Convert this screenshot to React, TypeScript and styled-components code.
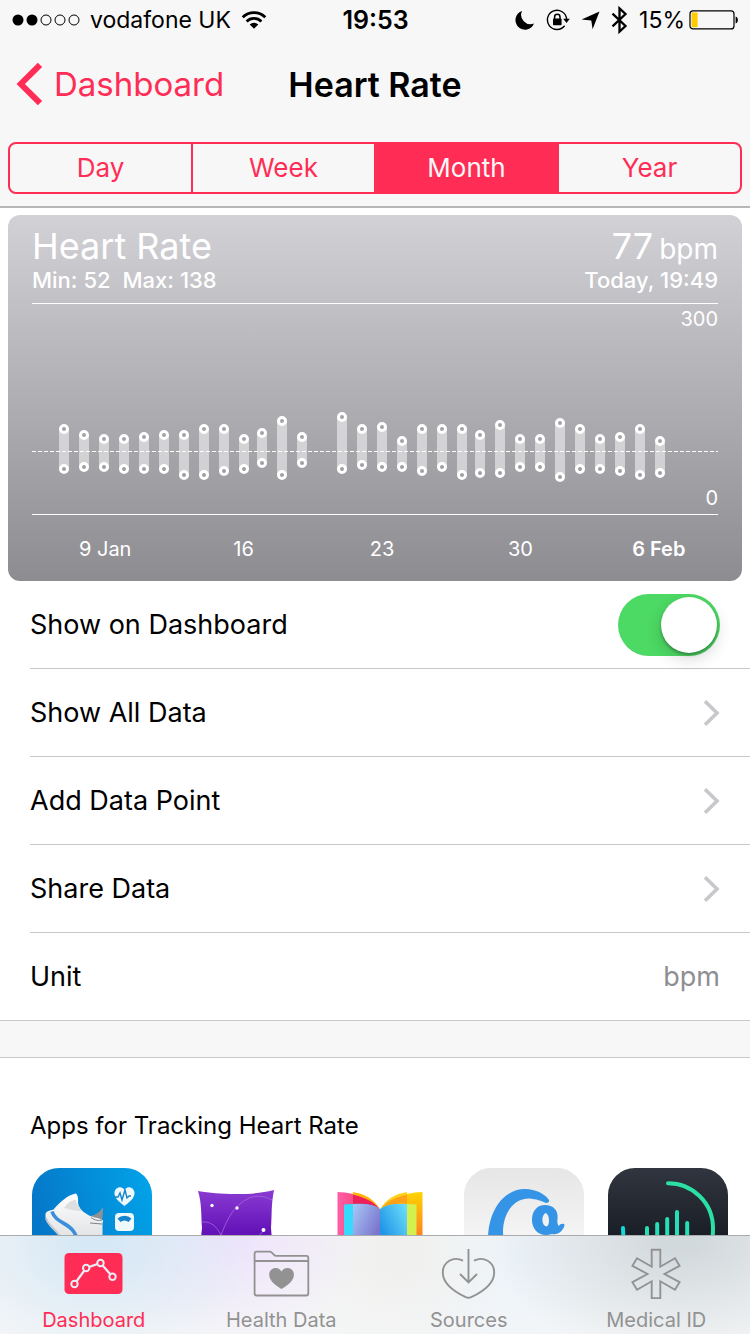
import React, { useState } from 'react';
import styled, { createGlobalStyle } from 'styled-components';

const PINK = '#ff2d55';
const GREY = '#929292';
const LINE = '#c8c7cc';

const GlobalStyle = createGlobalStyle`
  *, *::before, *::after { box-sizing: border-box; }
  body {
    margin: 0;
    background: #fff;
    color: #000;
    font-family: Inter, "Liberation Sans", sans-serif;
  }
  button, input { font: inherit; color: inherit; margin: 0; }
`;

const Page = styled.div`
  display: flex;
  flex-direction: column;
  min-height: 100vh;
`;

const Header = styled.header`
  background: #f7f7f7;
  border-bottom: 2px solid #b7b7b7;
`;

const StatusBar = styled.div`
  display: grid;
  grid-template-columns: 1fr auto 1fr;
  align-items: center;
  height: 40px;
  padding: 0 11px 0 12px;
  font-size: 23px;
`;

const StatusGroup = styled.div<{ $end?: boolean }>`
  display: flex;
  align-items: center;
  justify-content: ${(p) => (p.$end ? 'flex-end' : 'flex-start')};
  gap: ${(p) => (p.$end ? 11 : 10)}px;
`;

const Clock = styled.time`
  font-size: 25px;
  font-weight: 600;
`;

const Battery = styled.span`
  display: flex;
  align-items: center;
  gap: 4px;
`;

const NavBar = styled.nav`
  display: grid;
  grid-template-columns: 1fr auto 1fr;
  align-items: center;
  height: 88px;
  padding: 0 16px;
`;

const BackLink = styled.a`
  display: flex;
  align-items: center;
  gap: 10px;
  color: ${PINK};
  font-size: 33px;
  text-decoration: none;
`;

const NavTitle = styled.h1`
  margin: 0;
  font-size: 34px;
  font-weight: 600;
`;

const Segments = styled.div`
  display: flex;
  height: 52px;
  margin: 14px 8px 12px;
  border: 2px solid ${PINK};
  border-radius: 8px;
  overflow: hidden;
`;

const Segment = styled.button<{ $active: boolean }>`
  flex: 1;
  padding: 0;
  border: 0;
  background: ${(p) => (p.$active ? PINK : 'transparent')};
  color: ${(p) => (p.$active ? '#f7f7f7' : PINK)};
  font-size: 26px;
  line-height: 48px;
  & + & { border-left: 2px solid ${PINK}; }
`;

const Card = styled.section`
  margin: 7px 8px 0;
  padding: 11px 0 12px;
  border-radius: 12px;
  background: linear-gradient(#d2d1d6, #8d8c91);
  color: #fff;
`;

const CardRow = styled.div<{ $large?: boolean }>`
  display: flex;
  justify-content: space-between;
  align-items: baseline;
  height: ${(p) => (p.$large ? 40 : 28)}px;
  margin: 0 24px;
  font-size: ${(p) => (p.$large ? 36 : 22)}px;
  font-weight: ${(p) => (p.$large ? 400 : 500)};
  line-height: ${(p) => (p.$large ? 40 : 28)}px;
`;

const CardTitle = styled.h2`
  margin: 0;
  font: inherit;
`;

const Range = styled.span`
  display: flex;
  gap: 12px;
`;

const BpmUnit = styled.span`
  margin-left: 6px;
  font-size: 28px;
`;

const Plot = styled.div`
  position: relative;
  margin: 9px 24px 0;
  border-top: 1px solid #fff;
  border-bottom: 1px solid #fff;
`;

const PlotDrawing = styled.svg`
  display: block;
  width: 100%;
`;

const ScaleLabel = styled.span<{ $bottom?: boolean }>`
  position: absolute;
  right: 0;
  ${(p) => (p.$bottom ? 'bottom: 4px;' : 'top: 3px;')}
  font-size: 20px;
  line-height: 24px;
`;

const DateAxis = styled.div`
  display: grid;
  grid-template-columns: repeat(5, 1fr);
  margin-top: 15px;
  padding: 0 14px 0 28px;
  text-align: center;
  font-size: 20px;
  line-height: 39px;
`;

const AxisDate = styled.span<{ $current: boolean }>`
  font-weight: ${(p) => (p.$current ? 600 : 400)};
`;

const Rows = styled.div`
  border-bottom: 1px solid ${LINE};
  font-size: 27px;
  > * + * { border-top: 1px solid ${LINE}; }
`;

const rowLayout = `
  display: flex;
  align-items: center;
  justify-content: space-between;
  box-sizing: content-box;
  height: 87px;
  margin-left: 30px;
  padding: 0 30px 0 0;
  color: inherit;
  text-decoration: none;
`;

const LinkRow = styled.a`${rowLayout}`;
const ValueRow = styled.div`${rowLayout}`;
const SwitchRow = styled.label`${rowLayout}`;

const RowValue = styled.span`
  color: #8e8e93;
`;

const Switch = styled.input`
  appearance: none;
  display: flex;
  align-items: center;
  width: 102px;
  height: 62px;
  padding: 0 3px;
  border-radius: 31px;
  background: #e5e5ea;
  &::before {
    content: '';
    width: 56px;
    height: 56px;
    border-radius: 50%;
    background: #fff;
    box-shadow: 0 6px 16px rgba(0, 0, 0, 0.16), 0 2px 3px rgba(0, 0, 0, 0.3);
  }
  &:checked {
    justify-content: flex-end;
    background: #4cd964;
  }
`;

const AppsSection = styled.section`
  flex: 1;
  border-top: 36px solid #f7f7f7;
  padding-bottom: 46px;
`;

const AppsTitle = styled.h2`
  margin: 0;
  padding: 52px 30px 26px;
  border-top: 1px solid ${LINE};
  font-size: 24px;
  font-weight: 400;
  line-height: 32px;
`;

const AppStrip = styled.div`
  display: flex;
  gap: 24px;
  padding: 0 22px 0 32px;
  overflow: hidden;
`;

const AppLink = styled.a`
  flex: none;
  width: 120px;
  height: 120px;
  > svg { display: block; }
`;

const TabBar = styled.nav`
  position: fixed;
  left: 0;
  right: 0;
  bottom: 0;
  display: grid;
  grid-template-columns: repeat(4, 1fr);
  height: 99px;
  border-top: 1px solid #a9acae;
  background:
    radial-gradient(ellipse 22% 120% at 13% 10%, #d6e8f5 10%, rgba(225, 238, 248, 0) 100%),
    radial-gradient(ellipse 18% 110% at 31% 0%, #efe4fb 10%, rgba(241, 234, 250, 0) 100%),
    radial-gradient(ellipse 16% 110% at 53% 20%, #f0f0ee 10%, rgba(240, 240, 238, 0) 100%),
    radial-gradient(ellipse 26% 120% at 91% 5%, #d2d9dc 10%, rgba(220, 226, 229, 0) 100%),
    radial-gradient(ellipse 20% 110% at 69% 20%, #edf4fa 10%, rgba(240, 245, 250, 0) 100%),
    #f5f6f7;
`;

const Tab = styled.a<{ $active: boolean }>`
  display: flex;
  flex-direction: column;
  align-items: center;
  padding-top: 11px;
  gap: 7px;
  color: ${(p) => (p.$active ? PINK : GREY)};
  font-size: 20px;
  line-height: 28px;
  text-decoration: none;
`;

const SignalDots = () => (
  <svg width="68" height="14" viewBox="0 0 68 14" aria-hidden="true">
    {[6, 20, 34, 48, 62].map((cx, i) => (
      <circle key={cx} cx={cx} cy="7" r={i < 2 ? 5.5 : 5} fill={i < 2 ? '#000' : 'none'} stroke="#000" strokeWidth={i < 2 ? 0 : 1} />
    ))}
  </svg>
);

const WifiIcon = () => (
  <svg width="26" height="20" viewBox="0 0 26 20" fill="none" stroke="#000" strokeWidth="2.8" aria-hidden="true">
    <path d="M1.7 7.3a16 16 0 0 1 22.6 0" />
    <path d="M5.6 11.5a10.5 10.5 0 0 1 14.8 0" />
    <path d="M13 18.8l-4.3-4.3a6.1 6.1 0 0 1 8.6 0z" fill="#000" stroke="none" />
  </svg>
);

const MoonIcon = () => (
  <svg width="20" height="20" viewBox="0 0 20 20" aria-hidden="true">
    <path d="M7 1A9.6 9.6 0 1 0 19 13.6 9.4 9.4 0 0 1 7 1z" />
  </svg>
);

const RotationLockIcon = () => (
  <svg width="24" height="22" viewBox="0 0 24 22" aria-hidden="true">
    <path d="M18.6 16.8A9.6 9.6 0 1 1 20.6 10" fill="none" stroke="#000" strokeWidth="1.4" />
    <path d="M17.2 9.8h6.6l-3.3 4.2z" />
    <rect x="7" y="9.6" width="8.6" height="6.6" rx="0.8" />
    <path d="M8.6 10V8a2.7 2.7 0 0 1 5.4 0v2" fill="none" stroke="#000" strokeWidth="1.5" />
  </svg>
);

const LocationIcon = () => (
  <svg width="19" height="19" viewBox="0 0 19 19" aria-hidden="true">
    <path d="M18.5 .6L11.6 18.2 10.3 9.6.6 8.6z" />
  </svg>
);

const BluetoothIcon = () => (
  <svg width="17" height="28" viewBox="0 0 17 28" fill="none" stroke="#000" strokeWidth="2.3" aria-hidden="true">
    <path d="M1.5 7.6l13 12.4-6 5.6V2.4l6 5.6-13 12.4" />
  </svg>
);

const BatteryIcon = () => (
  <svg width="50" height="20" viewBox="0 0 50 20" aria-hidden="true">
    <rect x="1" y="0.9" width="44" height="18" rx="3" fill="none" stroke="#000" strokeWidth="1.2" />
    <rect x="2.6" y="2.6" width="6" height="14.6" rx="1" fill="#ffcc00" />
    <path d="M46.6 6.5c3 .6 3 6.4 0 7z" />
  </svg>
);

const BackChevron = () => (
  <svg width="28" height="44" viewBox="0 0 28 44" fill="none" stroke={PINK} strokeWidth="6" aria-hidden="true">
    <path d="M24 2.8L4.8 22 24 41.200" />
  </svg>
);

const Disclosure = () => (
  <svg width="17" height="28" viewBox="0 0 17 28" fill="none" stroke="#c7c7cc" strokeWidth="3.6" aria-hidden="true">
    <path d="M2 2.2L14 14 2 25.8" />
  </svg>
);

// x position, highest reading and lowest reading of each day, in plot units
const days: [number, number, number][] = [
  [32, 125, 165], [52, 131, 163], [72, 135, 163], [92, 135, 165], [112, 133, 165],
  [132, 131, 165], [152, 131, 171], [172, 125, 171], [192, 125, 167], [212, 135, 165],
  [230, 129, 159], [250, 117, 171], [270, 133, 159], [310, 113, 165], [330, 125, 161],
  [350, 123, 163], [370, 137, 163], [390, 125, 167], [410, 125, 163], [430, 125, 171],
  [448, 131, 169], [468, 121, 169], [488, 135, 163], [508, 135, 163], [528, 119, 173],
  [548, 125, 165], [568, 135, 165], [588, 133, 167], [608, 125, 171], [628, 137, 169],
];

const HeartRatePlot = () => (
  <PlotDrawing viewBox="0 0 686 210" role="img" aria-label="Daily heart rate range">
    {days.map(([x, high, low]) => (
      <g key={x}>
        <rect x={x - 5} y={high} width="10" height={low - high} fill="#fff" fillOpacity="0.5" />
        <circle cx={x} cy={high} r="3.5" fill="#a3a2a7" stroke="#fff" strokeWidth="3" />
        <circle cx={x} cy={low} r="3.5" fill="#9f9ea3" stroke="#fff" strokeWidth="3" />
      </g>
    ))}
    <path d="M0 147.5H686" stroke="#fff" strokeDasharray="4 2" />
  </PlotDrawing>
);

const ShoeApp = () => (
  <svg width="120" height="120" viewBox="0 0 120 120" aria-hidden="true">
    <defs>
      <linearGradient id="shoeBg" x1="0" y1="0.3" x2="1" y2="0">
        <stop offset="0" stopColor="#0577c8" />
        <stop offset="1" stopColor="#02a4ea" />
      </linearGradient>
      <linearGradient id="shoeBody" gradientUnits="userSpaceOnUse" x1="0" y1="25" x2="0" y2="90">
        <stop offset="0" stopColor="#fff" />
        <stop offset="1" stopColor="#d4d6d8" />
      </linearGradient>
    </defs>
    <rect width="120" height="120" rx="27" fill="url(#shoeBg)" />
    <path d="M58 48c6-1 10-4 13-9 0 5 0 10-1.500 14H58z" fill="#8d9298" />
    <path d="M43.500 25.500c-8 2-14 7-22 16-4 1-8 2-8 5-.5 6 3 11 10 17l8 8v14h39V55c1-2 1-3-1-3.500-4-2-10-2-14-5C49 43 46 38 46 34c.5-4-.5-8-2.500-8.500z" fill="url(#shoeBody)" />
    <path d="M32 40c4-6 8-8 12-8 1 5 3 8 6 11-6 0-12-1-18-3z" fill="#dcdee0" />
    <path d="M20 43.500c3 10 14 11 20 18 3 3 4 6 5 10" fill="none" stroke="#3a8fdd" strokeWidth="3.600" />
    <path d="M14 50c2 7 9 11 14 18" fill="none" stroke="#c6c9cc" strokeWidth="2" />
    <path d="M59 49.500c4 3 8 3.500 11 2.500M58 55l12 1" stroke="#7d8288" strokeWidth="1" fill="none" />
    <path d="M92.500 38C84 32 82.500 28 82.500 25c0-6 7.500-8 10-3 2.500-5 10-3 10 3 0 3-1.500 7-10 13z" fill="#eef8fd" />
    <path d="M83 29h3l2-4 2 7 3-10 2 8 2-2h2" stroke="#1384cc" strokeWidth="1.400" fill="none" />
    <rect x="83" y="45" width="19" height="18" rx="4" fill="#eef8fd" />
    <path d="M85.500 50.500a10 10 0 0 1 14 0l-3 3.500a6 6 0 0 0-8 0z" fill="#1384cc" />
  </svg>
);

const PillowApp = () => (
  <svg width="120" height="120" viewBox="0 0 120 120" aria-hidden="true">
    <defs>
      <linearGradient id="pillow" x1="0" y1="0" x2="0" y2="1">
        <stop offset="0" stopColor="#8a3bd2" />
        <stop offset="0.550" stopColor="#6413b8" />
      </linearGradient>
    </defs>
    <path d="M22 23c12 2 22 3 38 3 15 0 26-1 38-4-3 15-2 25-3 38l3 38c-25-4-50-4-76 0l4-38c-1-12 0-24-4-37z" fill="url(#pillow)" />
    <path d="M26 54c9-1 15 5 19 13C52 50 57 38 73 30c8-3 16-2 23 2M76 76l12-14" stroke="#a566e0" strokeWidth="0.800" fill="none" />
    <circle cx="36" cy="37.500" r="1.700" fill="#fff" />
    <circle cx="61" cy="40" r="1.700" fill="#fff" />
    <circle cx="87.500" cy="62" r="2" fill="#fff" />
  </svg>
);

const BookApp = () => (
  <svg width="120" height="120" viewBox="0 0 120 120" aria-hidden="true">
    <defs>
      <linearGradient id="leftPage" x1="0" y1="0" x2="1" y2="1">
        <stop offset="0" stopColor="#a6c9f8" />
        <stop offset="0.700" stopColor="#7c75cc" />
      </linearGradient>
      <linearGradient id="rightPage" x1="0" y1="1" x2="1" y2="0">
        <stop offset="0.300" stopColor="#2196e8" />
        <stop offset="1" stopColor="#6fe0fa" />
      </linearGradient>
      <linearGradient id="pinkPage" x1="0" y1="0" x2="1" y2="0">
        <stop offset="0" stopColor="#ff5fa8" />
        <stop offset="1" stopColor="#f0284a" />
      </linearGradient>
      <linearGradient id="orangePage" x1="0" y1="0" x2="0" y2="1">
        <stop offset="0" stopColor="#ffd400" />
        <stop offset="0.600" stopColor="#ff8020" />
      </linearGradient>
    </defs>
    <path d="M17.500 24C38 25 53 31 60 41.500V92l-42.500 6z" fill="url(#pinkPage)" />
    <path d="M33 26.500C46 30 55 34 60 41.500L33 38z" fill="#ef1f5c" />
    <path d="M33 24c12 2 21 7 27 17.500-6-8-15-12-27-15z" fill="#ffb300" />
    <path d="M102.500 24C82 25 67 31 60 41.500V92l42.500 6z" fill="url(#orangePage)" />
    <path d="M87 26.500v12L60 41.500c7-9 15-13 27-15z" fill="#ffa21a" />
    <path d="M60 41.500C66 31 75 26 87 24v2.500c-12 3-21 7-27 15z" fill="#ffd21a" />
    <path d="M24 36.500c16-1.500 30-1 36 5V92l-36-4z" fill="#35dafc" />
    <path d="M96.500 36.500c-16-1.500-30-1-36.500 5V92l36.500-4z" fill="#d4f04e" />
    <path d="M33 36.200c12-.8 22 0 27 5.300V92l-27-4z" fill="url(#leftPage)" />
    <path d="M87 36.200c-12-.8-22 0-27 5.300V92l27-4z" fill="url(#rightPage)" />
  </svg>
);

const WaveApp = () => (
  <svg width="120" height="120" viewBox="0 0 120 120" aria-hidden="true">
    <defs>
      <linearGradient id="waveBg" x1="0" y1="0" x2="0" y2="1">
        <stop offset="0" stopColor="#e6e6e6" />
        <stop offset="1" stopColor="#fff" />
      </linearGradient>
    </defs>
    <rect width="120" height="120" rx="27" fill="url(#waveBg)" />
    <path d="M24 72C24 42 40 21 61 21c11 0 20 5 24 11 .5 2-1 3-3 3-5-2-9-4-17-4.500C49 30.500 39 46 39 64c0 4 1 6 2 8z" fill="#3594e6" />
    <path fillRule="evenodd" d="M81 37c8 0 13.500 5 12.500 14-.5 3 0 6 1.500 7 1-3 6-3 5.500-.5-2 6-6 9.500-12.500 8.500-12 4-20-4-20-14 0-9 5-15 13-15zm.5 8c-4.500 2-4 13 1 13.500 4-1 3-13-1-13.500z" fill="#3594e6" />
  </svg>
);

const PulseApp = () => (
  <svg width="120" height="120" viewBox="0 0 120 120" fill="none" strokeLinecap="round" aria-hidden="true">
    <defs>
      <linearGradient id="pulseBg" x1="0" y1="0" x2="0" y2="1">
        <stop offset="0" stopColor="#30353f" />
        <stop offset="0.600" stopColor="#181d25" />
      </linearGradient>
    </defs>
    <rect width="120" height="120" rx="27" fill="url(#pulseBg)" />
    <path d="M60 15.200c24 0 45 19 45 45 0 4 0 8-1 11" stroke="#2be0a4" strokeWidth="4" />
    <g strokeWidth="4">
      <path d="M15 60q0 6 1 12" stroke="#14d8d8" />
      <path d="M39 60v22M49.200 56v32M59.200 51v40M69 44v44M79.200 55v24" stroke="#26dfb6" />
    </g>
  </svg>
);

const DashboardIcon = () => (
  <svg width="60" height="52" viewBox="0 0 60 52" aria-hidden="true">
    <rect x="0.500" y="6" width="58" height="41" rx="4.500" fill={PINK} />
    <path d="M10.500 37L22.200 21 36.500 16l12 13.700" fill="none" stroke="#e9eef6" strokeWidth="2.200" />
    <g fill={PINK} stroke="#e9eef6" strokeWidth="2">
      <circle cx="10.500" cy="37" r="3.200" />
      <circle cx="22.200" cy="21" r="3.200" />
      <circle cx="36.500" cy="16" r="3.200" />
      <circle cx="48.500" cy="29.700" r="3.200" />
    </g>
  </svg>
);

const HealthDataIcon = () => (
  <svg width="60" height="52" viewBox="0 0 60 52" fill="none" stroke={GREY} strokeWidth="1.800" aria-hidden="true">
    <path d="M3.600 46.500V6.700q0-2 2-2H18.300q1.500 0 2.500 1l2 2q1 1.200 2.500 1.200h30q2 0 2 2v35.600q0 2-2 2H5.600q-2 0-2-2zM3.600 14h53.700" />
    <path d="M30.500 42C21.200 36.500 18.200 32 18.200 27.500c0-7 9-9 12.300-3 3.400-6 12.400-4 12.400 3 0 4.500-3 9-12.400 14.500z" fill={GREY} stroke="none" />
  </svg>
);

const SourcesIcon = () => (
  <svg width="60" height="52" viewBox="0 0 60 52" fill="none" stroke={GREY} strokeWidth="1.900" aria-hidden="true">
    <path d="M29.500 2v33M21 27l8.500 8.500 8.500-8.500" />
    <path d="M24 13.700C14.500 9 3.800 14.500 3.800 25.500c0 12 12 19.500 23 24.700q2.700 1.200 5.400 0c11-5.200 23-12.700 23-24.700 0-11-10.700-16.500-20.200-11.800" />
  </svg>
);

const MedicalIdIcon = () => (
  <svg width="60" height="52" viewBox="0 0 60 52" fill="none" stroke={GREY} strokeWidth="1.900" aria-hidden="true">
    <path d="M25.700 2.700h8.600v17L49 11.200l4.600 7.600L38.500 27l15.100 8.200-4.600 7.600-14.700-8.500v17h-8.600v-17L11 42.800l-4.600-7.600L21.500 27 6.400 18.800l4.600-7.600 14.700 8.500z" />
  </svg>
);

const periods = ['Day', 'Week', 'Month', 'Year'];
const axisDates = ['9 Jan', '16', '23', '30', '6 Feb'];
const actions = ['Show All Data', 'Add Data Point', 'Share Data'];
const apps = [
  { name: 'Step tracker', Icon: ShoeApp },
  { name: 'Sleep tracker', Icon: PillowApp },
  { name: 'Journal', Icon: BookApp },
  { name: 'Wave', Icon: WaveApp },
  { name: 'Pulse', Icon: PulseApp },
];
const tabs = [
  { name: 'Dashboard', Icon: DashboardIcon },
  { name: 'Health Data', Icon: HealthDataIcon },
  { name: 'Sources', Icon: SourcesIcon },
  { name: 'Medical ID', Icon: MedicalIdIcon },
];

export default function App() {
  const [period, setPeriod] = useState('Month');
  const [shown, setShown] = useState(true);

  return (
    <Page>
      <GlobalStyle />
      <Header>
        <StatusBar>
          <StatusGroup>
            <SignalDots />
            <span>vodafone UK</span>
            <WifiIcon />
          </StatusGroup>
          <Clock>19:53</Clock>
          <StatusGroup $end>
            <MoonIcon />
            <RotationLockIcon />
            <LocationIcon />
            <BluetoothIcon />
            <Battery>
              15%
              <BatteryIcon />
            </Battery>
          </StatusGroup>
        </StatusBar>
        <NavBar>
          <BackLink href="#dashboard">
            <BackChevron />
            Dashboard
          </BackLink>
          <NavTitle>Heart Rate</NavTitle>
        </NavBar>
        <Segments role="group" aria-label="Period">
          {periods.map((p) => (
            <Segment key={p} type="button" $active={p === period} aria-pressed={p === period} onClick={() => setPeriod(p)}>
              {p}
            </Segment>
          ))}
        </Segments>
      </Header>

      <Card>
        <CardRow $large>
          <CardTitle>Heart Rate</CardTitle>
          <span>
            77<BpmUnit>bpm</BpmUnit>
          </span>
        </CardRow>
        <CardRow>
          <Range>
            <span>Min: 52</span>
            <span>Max: 138</span>
          </Range>
          <span>Today, 19:49</span>
        </CardRow>
        <Plot>
          <HeartRatePlot />
          <ScaleLabel>300</ScaleLabel>
          <ScaleLabel $bottom>0</ScaleLabel>
        </Plot>
        <DateAxis>
          {axisDates.map((d, i) => (
            <AxisDate key={d} $current={i === axisDates.length - 1}>
              {d}
            </AxisDate>
          ))}
        </DateAxis>
      </Card>

      <Rows>
        <SwitchRow>
          Show on Dashboard
          <Switch type="checkbox" role="switch" checked={shown} onChange={(e) => setShown(e.target.checked)} />
        </SwitchRow>
        {actions.map((a) => (
          <LinkRow key={a} href="#data">
            {a}
            <Disclosure />
          </LinkRow>
        ))}
        <ValueRow>
          Unit
          <RowValue>bpm</RowValue>
        </ValueRow>
      </Rows>

      <AppsSection>
        <AppsTitle>Apps for Tracking Heart Rate</AppsTitle>
        <AppStrip>
          {apps.map(({ name, Icon }) => (
            <AppLink key={name} href="#app" aria-label={name}>
              <Icon />
            </AppLink>
          ))}
        </AppStrip>
      </AppsSection>

      <TabBar>
        {tabs.map(({ name, Icon }, i) => (
          <Tab key={name} href="#tab" $active={i === 0}>
            <Icon />
            {name}
          </Tab>
        ))}
      </TabBar>
    </Page>
  );
}
